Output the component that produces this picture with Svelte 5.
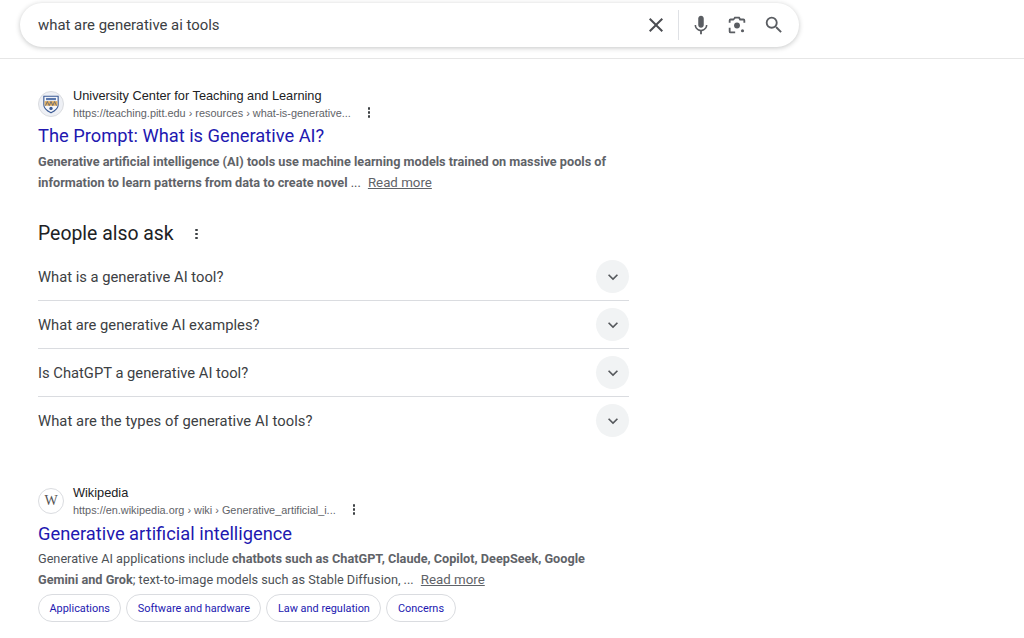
<script>
  const questions = [
    'What is a generative AI tool?',
    'What are generative AI examples?',
    'Is ChatGPT a generative AI tool?',
    'What are the types of generative AI tools?'
  ];
  const chips = ['Applications', 'Software and hardware', 'Law and regulation', 'Concerns'];
</script>

<div class="page">
  <header class="top">
    <div class="search">
      <span class="query">what are generative ai tools</span>
      <div class="actions">
        <svg class="x" viewBox="0 0 24 24" aria-hidden="true"><path d="M19 6.41 17.59 5 12 10.59 6.41 5 5 6.41 10.59 12 5 17.59 6.41 19 12 13.41 17.59 19 19 17.59 13.41 12z"/></svg>
        <span class="sep"></span>
        <svg class="ic mic" viewBox="0 0 24 24" aria-hidden="true"><path d="M12 15c1.66 0 3-1.31 3-2.97V5c0-1.66-1.34-3-3-3S9 3.34 9 5v7.03C9 13.69 10.34 15 12 15z"/><path d="M17.3 12c0 3-2.54 5.1-5.3 5.1S6.7 15 6.7 12H5c0 3.41 2.72 6.23 6 6.72V22h2v-3.28c3.28-.49 6-3.31 6-6.72h-1.7z"/></svg>
        <svg class="ic lens" viewBox="0 0 24 24" aria-hidden="true"><circle cx="12" cy="12.5" r="3.2"/><circle cx="18" cy="18.2" r="1.7"/><path d="M3 9.5V7a2 2 0 0 1 2-2h3l1.200-2h5.600l1.200 2h3a2 2 0 0 1 2 2v2.500h-2V7h-4.200l-1.200-2h-3.200L8.200 7H5v2.500zM3 15h2v4h5v2H5a2 2 0 0 1-2-2z"/></svg>
        <svg class="ic glass" viewBox="0 0 24 24" aria-hidden="true"><path d="M15.5 14h-.79l-.28-.27A6.471 6.471 0 0 0 16 9.5 6.5 6.5 0 1 0 9.5 16c1.61 0 3.09-.59 4.23-1.57l.27.28v.79l5 4.99L20.49 19l-4.99-5zm-6 0C7.01 14 5 11.99 5 9.5S7.01 5 9.5 5 14 7.01 14 9.5 11.99 14 9.5 14z"/></svg>
      </div>
    </div>
  </header>

  <main class="results">
    <article class="result first">
      <div class="source">
        <span class="favicon pitt">
          <svg viewBox="0 0 20 20" aria-hidden="true">
            <path d="M3.500 3h13v8c0 3.600-3 5.400-6.500 7C6.500 16.400 3.500 14.600 3.500 11z" fill="#f6f7fb" stroke="#3a5a94" stroke-width="1"/>
            <rect x="4.200" y="7.400" width="11.600" height="4.200" fill="#e3ae5c"/>
            <path d="M5 11.500l1.700-3.800 1.700 3.800 1.600-3.800 1.600 3.800 1.700-3.800 1.700 3.800" fill="none" stroke="#55607a" stroke-width=".7"/>
            <path d="M5.500 4.500h9v2H5.500z" fill="#5b78ad"/>
            <circle cx="10" cy="14" r="1.500" fill="#3a5a94"/>
          </svg>
        </span>
        <div class="site">
          <div class="name">University Center for Teaching and Learning</div>
          <div class="url-row">
            <span class="url">https://teaching.pitt.edu › resources › what-is-generative...</span>
            <span class="dots"><i></i><i></i><i></i></span>
          </div>
        </div>
      </div>
      <h3 class="title">The Prompt: What is Generative AI?</h3>
      <p class="snippet bold-all"><b>Generative artificial intelligence (AI) tools use machine learning models trained on massive pools of information to learn patterns from data to create novel</b> ... <u>Read more</u></p>
    </article>

    <section class="paa">
      <div class="paa-head">
        <h2>People also ask</h2>
        <span class="dots"><i></i><i></i><i></i></span>
      </div>
      {#each questions as q, i}
        <div class="q" class:last={i === questions.length - 1}>
          <span class="q-text">{q}</span>
          <span class="chev">
            <svg viewBox="0 0 24 24" aria-hidden="true"><path d="M16.590 8.590 12 13.170 7.410 8.590 6 10l6 6 6-6z"/></svg>
          </span>
        </div>
      {/each}
    </section>

    <article class="result second">
      <div class="source">
        <span class="favicon wiki">W</span>
        <div class="site">
          <div class="name">Wikipedia</div>
          <div class="url-row">
            <span class="url">https://en.wikipedia.org › wiki › Generative_artificial_i...</span>
            <span class="dots"><i></i><i></i><i></i></span>
          </div>
        </div>
      </div>
      <h3 class="title">Generative artificial intelligence</h3>
      <p class="snippet">Generative AI applications include <b>chatbots such as ChatGPT, Claude, Copilot, DeepSeek, Google Gemini and Grok</b>; text-to-image models such as Stable Diffusion, ... <u>Read more</u></p>
      <div class="chips">
        {#each chips as c}
          <span class="chip">{c}</span>
        {/each}
      </div>
    </article>
  </main>
</div>

<style>
  :global(body) {
    margin: 0;
    background: #fff;
    font-family: Roboto, "Liberation Sans", Arial, sans-serif;
    overflow: hidden;
  }
  .page {
    width: 1024px;
    height: 638px;
    overflow: hidden;
    color: #202124;
  }
  .top {
    height: 55px;
    border-bottom: 1px solid #e6e6e6;
    padding: 3px 0 0 20px;
  }
  .search {
    width: 779px;
    height: 44px;
    box-sizing: border-box;
    border-radius: 23px;
    background: #fff;
    box-shadow: 0 1px 5px rgba(32, 33, 36, 0.26);
    display: flex;
    align-items: center;
    justify-content: space-between;
    padding: 0 14px 0 18px;
  }
  .query {
    font-size: 14.900px;
    color: #3c4043;
  }
  .actions {
    display: flex;
    align-items: center;
  }
  .actions svg {
    fill: #5a5d62;
    display: block;
  }
  .x {
    width: 24px;
    height: 24px;
    fill: #4b4d52 !important;
  }
  .sep {
    width: 1px;
    height: 30px;
    background: #dfe1e5;
    margin: 0 11px 0 10px;
  }
  .ic {
    width: 22px;
    height: 22px;
  }
  .mic { margin-right: 14px; }
  .lens { margin-right: 15px; }
  .results {
    padding: 27px 0 0 38px;
    width: 591px;
  }
  .source {
    display: flex;
    align-items: center;
    height: 36px;
  }
  .favicon {
    width: 26px;
    height: 26px;
    border-radius: 50%;
    flex: none;
    display: flex;
    align-items: center;
    justify-content: center;
    box-sizing: border-box;
    border: 1px solid #dadce0;
    margin-right: 9px;
  }
  .pitt {
    background: #eef0f5;
  }
  .pitt svg {
    width: 22px;
    height: 22px;
  }
  .wiki {
    font-family: "Liberation Serif", serif;
    font-size: 14px;
    color: #555;
  }
  .site {
    min-width: 0;
  }
  .name {
    font-family: "Liberation Sans", Arial, sans-serif;
    font-size: 12.750px;
    line-height: 18px;
    color: #202124;
    white-space: nowrap;
  }
  .url-row {
    display: flex;
    align-items: center;
    height: 18px;
    margin-top: -1px;
  }
  .url {
    font-family: "Liberation Sans", Arial, sans-serif;
    font-size: 10.900px;
    line-height: 18px;
    color: #5f6368;
    white-space: nowrap;
  }
  .dots {
    display: inline-flex;
    flex-direction: column;
    gap: 1.600px;
    margin-left: 17px;
  }
  .dots i {
    width: 2.600px;
    height: 2.600px;
    border-radius: 50%;
    background: #3c4043;
    display: block;
  }
  .title {
    margin: 1px 0 0;
    font-weight: 400;
    font-size: 18.300px;
    line-height: 26px;
    color: #2218b0;
    white-space: nowrap;
  }
  .snippet {
    margin: 2px 0 0;
    font-size: 12.700px;
    line-height: 21px;
    color: #4d5156;
    width: 574px;
  }
  .bold-all b { color: #70757a; }
  .snippet u { color: #5f6368; margin-left: 4px; font-size: 13.300px; }
  .snippet b { font-weight: 700; color: #5f6368; }
  .paa {
    margin-top: 26px;
    width: 591px;
  }
  .paa-head {
    display: flex;
    align-items: center;
    height: 30px;
    margin-bottom: 4px;
  }
  .paa h2 {
    margin: 0;
    font-weight: 400;
    font-size: 19.400px;
    line-height: 30px;
    color: #202124;
  }
  .paa-head .dots {
    margin-left: 21.500px;
  }
  .q {
    height: 48px;
    box-sizing: border-box;
    border-bottom: 1px solid #dadce0;
    display: flex;
    align-items: center;
    justify-content: space-between;
    font-size: 14.750px;
    color: #3c4043;
  }
  .q.last { border-bottom-color: transparent; }
  .q.last .q-text { letter-spacing: 0.07px; }
  .chev {
    width: 33px;
    height: 33px;
    border-radius: 50%;
    background: #f1f3f4;
    display: flex;
    align-items: center;
    justify-content: center;
  }
  .chev svg {
    width: 20px;
    height: 20px;
    fill: #55585c;
  }
  .second {
    margin-top: 38px;
  }
  .second .title { margin-top: 2px; }
  .second .snippet {
    margin-top: 1px;
    line-height: 21px;
  }
  .chips {
    display: flex;
    gap: 5px;
    margin-top: 4px;
  }
  .chip {
    height: 28px;
    box-sizing: border-box;
    border: 1px solid #dadce0;
    border-radius: 14px;
    padding: 0 10.500px;
    display: flex;
    align-items: center;
    font-size: 10.900px;
    color: #2218b0;
    white-space: nowrap;
  }
</style>
